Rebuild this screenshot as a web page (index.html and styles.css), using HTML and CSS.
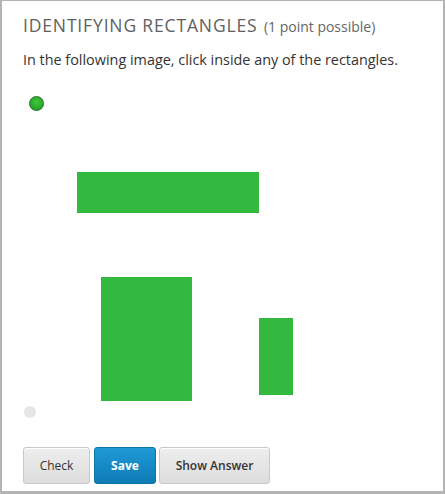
FILE: index.html
```html
<!DOCTYPE html>
<html>
<head>
<meta charset="utf-8">
<link rel="stylesheet" href="styles.css">
</head>
<body>
<div class="problem">
  <h2 class="title">IDENTIFYING RECTANGLES <span class="points">(1 point possible)</span></h2>
  <p class="prompt">In the following image, click inside any of the rectangles.</p>
  <div class="canvas">
    <span class="dot dot-green"></span>
    <span class="rect" style="left:54px;top:80px;width:182px;height:41px"></span>
    <span class="rect" style="left:78px;top:185px;width:91px;height:124px"></span>
    <span class="rect" style="left:236px;top:226px;width:34px;height:77px"></span>
    <span class="dot dot-gray"></span>
  </div>
  <div class="actions">
    <button class="btn btn-check">Check</button>
    <button class="btn btn-primary">Save</button>
    <button class="btn btn-show">Show Answer</button>
  </div>
</div>
</body>
</html>
```
FILE: styles.css
```css
* { box-sizing: border-box; }
html, body { margin: 0; padding: 0; background: #fff; }
body { font-family: "Open Sans", "Liberation Sans", sans-serif; }
.problem {
  width: 445px;
  height: 494px;
  border: solid #b4b4b4;
  border-width: 1px 2px 3px 2px;
  padding: 12px 0 0 21px;
}
.title {
  margin: 0;
  font-weight: 400;
  font-size: 17.5px;
  letter-spacing: 0.85px;
  color: #606060;
  line-height: 24px;
}
.points {
  font-size: 14px;
  letter-spacing: 0;
  color: #666;
  margin-left: 1px;
}
.prompt {
  margin: 10px 0 0;
  font-size: 14.4px;
  color: #333;
  line-height: 22px;
}
.canvas {
  position: relative;
  height: 340px;
  margin-top: 21px;
}
.rect {
  position: absolute;
  background: #33b840;
}
.dot {
  position: absolute;
  border-radius: 50%;
}
.dot-green {
  left: 6px; top: 4px;
  width: 15px; height: 15px;
  background: radial-gradient(circle at 50% 40%, #3cc63c, #1e9a1e);
  border: 1px solid #2a6a2a;
}
.dot-gray {
  left: 1px; top: 314px;
  width: 12px; height: 12px;
  background: #e6e6e6;
}
.actions {
  display: flex;
  gap: 4px;
  margin-top: 15px;
}
.btn {
  font-family: "Open Sans", "Liberation Sans", sans-serif;
  font-size: 12px;
  height: 37px;
  padding: 0;
  white-space: nowrap;
  border: 1px solid #c8c8c8;
  border-radius: 3px;
  background: linear-gradient(#eeeeee, #dddddd);
  color: #333;
  box-shadow: inset 0 1px 0 #fff;
}
.btn-check { width: 67px; }
.btn-primary {
  width: 62px;
  font-weight: 700;
  color: #fff;
  border-color: #0d72a8;
  background: linear-gradient(#1e9ad6, #0e7bb5);
  box-shadow: none;
}
.btn-show { width: 111px; font-weight: 600; margin-left: -1px; }
```
